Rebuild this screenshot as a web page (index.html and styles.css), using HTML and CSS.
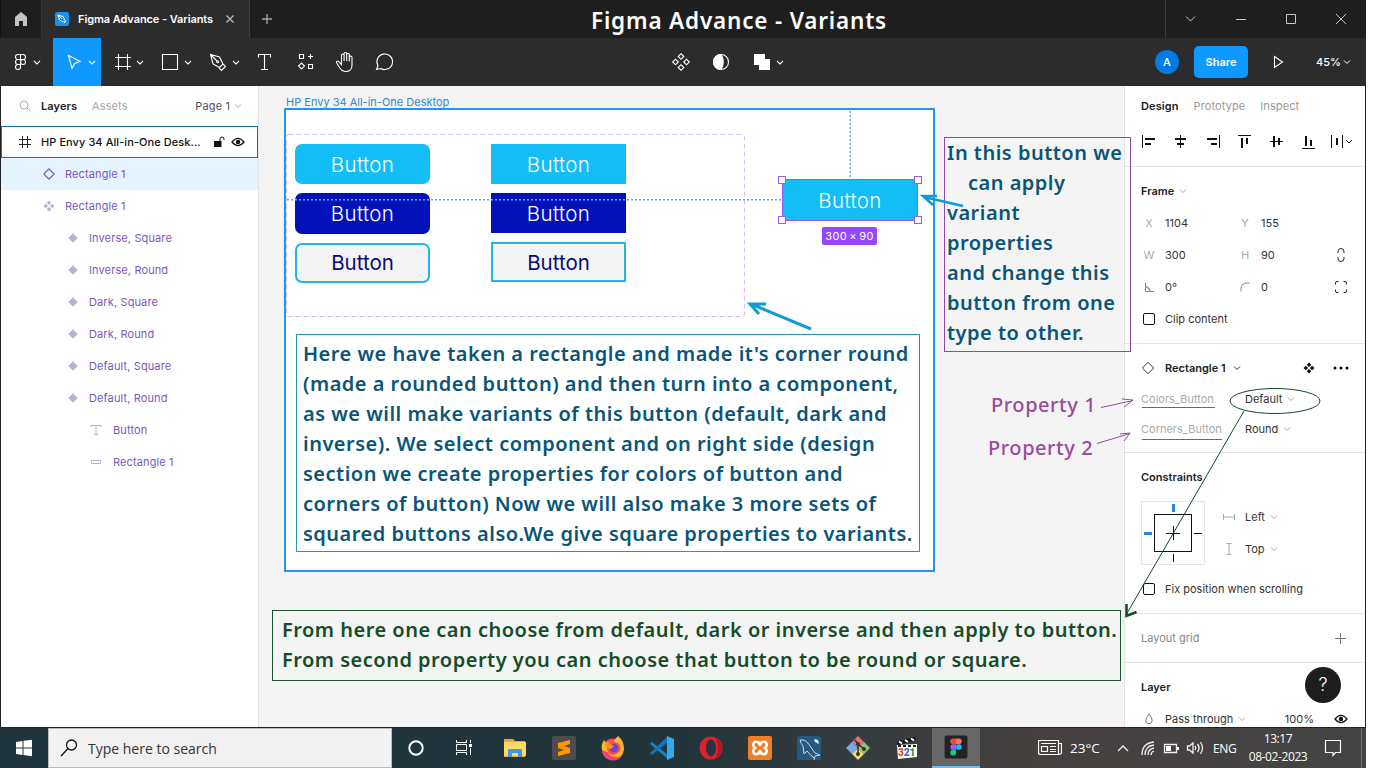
FILE: index.html
```html
<!DOCTYPE html>
<html lang="en">
<head>
<meta charset="utf-8">
<title>Figma Advance - Variants</title>
<link rel="stylesheet" href="styles.css">
</head>
<body>
<svg width="0" height="0" class="defs">
  <symbol id="chev" viewBox="0 0 8 8"><path d="M1 2.5 4 5.5 7 2.5" fill="none" stroke="currentColor"/></symbol>
  <symbol id="dia" viewBox="0 0 12 12"><path d="M6 .3 11.7 6 6 11.7.3 6z" fill="currentColor"/></symbol>
  <symbol id="four" viewBox="0 0 12 12"><path d="M6 .5 8.3 2.8 6 5.1 3.7 2.8zM6 6.9 8.3 9.2 6 11.5 3.7 9.2zM2.8 3.7 5.1 6 2.8 8.3.5 6zM9.2 3.7 11.5 6 9.2 8.3 6.9 6z" fill="currentColor"/></symbol>
  <symbol id="eye" viewBox="0 0 14 10"><path d="M1 5Q7-2.2 13 5 7 12.200 1 5z" fill="none" stroke="currentColor" stroke-width="1.200"/><circle cx="7" cy="5" r="2.200" fill="currentColor"/></symbol>
</svg>
<div class="app">
  <header class="titlebar">
    <div class="home"><svg width="40" height="38" viewBox="1 0 40 38"><path d="M15 26V17l6-5 6 5v9h-4v-5h-4v5z" fill="#c4c4c4"/></svg></div>
    <div class="tab">
      <svg width="14" height="14" viewBox="0 0 14 14"><rect width="14" height="14" rx="2" fill="#1592f5"/><path d="M3 3l5 1.500 2 4L8.500 10l-4-2zM3 3l4 4M9 11l2-2" fill="none" stroke="#fff"/></svg>
      <span class="tabname">Figma Advance - Variants</span>
      <svg class="close" width="10" height="10" viewBox="0 0 10 10"><path d="M1.500 1.500l7 7m0-7l-7 7" stroke="#b3b3b3" stroke-width="1.500"/></svg>
    </div>
    <svg class="plus" width="34" height="38" viewBox="250 0 34 38"><path d="M267 14v10M262 19h10" stroke="#a8a8a8" stroke-width="1.300"/></svg>
    <h1 class="caption">Figma Advance - Variants</h1>
    <svg class="winctl" width="201" height="38" viewBox="1165 0 201 38" fill="none" stroke="#c8c8c8"><path d="M1165.500 0v38" stroke="#3a3a3a"/><path d="M1186 16.500l4.500 4.500 4.500-4.500M1236 19.500h10M1286.500 14.500h9v9h-9zM1336 14l10 10m0-10l-10 10"/></svg>
  </header>

  <nav class="toolbar">
    <svg class="tool first" width="48" height="48" viewBox="5 38 48 48"><path d="M20.500 54.500H18a2.500 2.500 0 000 5h2.500zM20.500 54.500H23a2.500 2.500 0 010 5h-2.500M20.500 59.500H18a2.500 2.500 0 000 5h2.500zM20.500 64.500H18a2.500 2.500 0 102.500 2.500zM23 59.500a2.500 2.500 0 110 5 2.500 2.500 0 010-5z"/><path d="M34 61l3 3 3-3"/></svg>
    <svg class="tool on" width="48" height="48" viewBox="53 38 48 48"><path d="M68.500 55.500l11.500 6-5.300 1.900-2.700 5.100z"/><path d="M89 61l3 3 3-3"/></svg>
    <svg class="tool" width="48" height="48" viewBox="101 38 48 48"><path d="M118.500 54v16M127.500 54v16M115 57.500h16M115 66.500h16"/><path d="M137 61l3 3 3-3"/></svg>
    <svg class="tool" width="48" height="48" viewBox="149 38 48 48"><path d="M162.500 54.500h15v15h-15z"/><path d="M185 61l3 3 3-3"/></svg>
    <svg class="tool" width="48" height="48" viewBox="197 38 48 48"><path d="M210.500 54.500l9 2.500 3.500 7-3.500 3.500-6.500-3.500zM210.500 54.500l6.500 6.500M223 64l2.500 2.500-4 4-2.500-2.500"/><circle cx="217.700" cy="61.700" r="1"/><path d="M233 61l3 3 3-3"/></svg>
    <svg class="tool" width="40" height="48" viewBox="245 38 40 48"><path d="M258.500 57.500v-3h12v3M264.500 54.500v15M261 69.500h7"/></svg>
    <svg class="tool" width="40" height="48" viewBox="285 38 40 48"><path d="M299.500 54.500h4v4h-4zM308.500 64.500h4v4h-4zM310.500 54v5M308 56.500h5M301.500 63l3 3-3 3-3-3z"/></svg>
    <svg class="tool" width="40" height="48" viewBox="325 38 40 48"><path d="M341.500 65.500V55.300a1.300 1.300 0 012.600 0V61M344.100 61v-7.200a1.300 1.300 0 012.600 0V61M346.700 61v-6.500a1.300 1.300 0 012.600 0V61M349.300 61.500v-4a1.300 1.300 0 012.700 0V65c0 4-2.500 6.500-6 6.500-3.200 0-5-1.500-6.500-4l-3-4.700c-.6-1 .9-2.300 2-1.400l3 3.200"/></svg>
    <svg class="tool" width="40" height="48" viewBox="365 38 40 48"><path d="M376.500 69.500l1.500-3.800a7.800 7.800 0 112.800 2.800z"/></svg>
    <svg class="tool mid" width="126" height="48" viewBox="661 38 126 48"><path d="M681 53.700l2.800 2.800-2.800 2.800-2.800-2.800zM681 64.700l2.800 2.800-2.800 2.800-2.800-2.800zM675.500 59.200l2.800 2.800-2.800 2.800-2.800-2.800zM686.500 59.200l2.800 2.800-2.800 2.800-2.800-2.800z"/><circle cx="721" cy="62" r="7.500"/><path d="M721 54.500a7.500 7.500 0 000 15c3-4 3-11 0-15z" fill="#fff"/><path d="M754 54h11v5h5v11h-11v-5h-5z" fill="#fff" stroke="none"/><path d="M777 61l3 3 3-3"/></svg>
    <span class="avatar">A</span>
    <button class="share">Share</button>
    <svg class="tool play" width="24" height="48" viewBox="1266 38 24 48"><path d="M1274.500 56.500l8 5.500-8 5.500z"/></svg>
    <span class="zoomlevel">45%</span>
    <svg class="zchev" width="8" height="8"><use href="#chev"/></svg>
  </nav>

  <main class="work">
    <aside class="layers">
      <div class="lhead">
        <svg width="12" height="12" viewBox="0 0 12 12" fill="none" stroke="#aaa"><circle cx="5" cy="5" r="4"/><path d="M8 8l3.500 3.500"/></svg>
        <b>Layers</b><span class="mute">Assets</span><span class="page">Page 1</span><svg class="mute" width="8" height="8"><use href="#chev"/></svg>
      </div>
      <div class="row root">
        <svg width="12" height="12" viewBox="0 0 12 12"><path d="M3.500 0v12M8.500 0v12M0 3.500h12M0 8.500h12" stroke="#222"/></svg>
        <b>HP Envy 34 All-in-One Desk...</b>
        <svg class="lock" width="11" height="12" viewBox="0 0 11 12"><path d="M0 5h7.500v6H0z" fill="#111"/><path d="M6 5V3a2 2 0 014 0v1" fill="none" stroke="#111"/></svg>
        <svg width="14" height="10"><use href="#eye"/></svg>
      </div>
      <div class="row sel l1"><svg width="12" height="12" viewBox="0 0 12 12"><path d="M6 .8 11.200 6 6 11.200.8 6z" fill="none" stroke="#7d55c7" stroke-width="1.200"/></svg><span>Rectangle 1</span></div>
      <div class="row l1"><svg width="12" height="12"><use href="#four"/></svg><span>Rectangle 1</span></div>
      <div class="row l2"><svg width="10" height="10"><use href="#dia"/></svg><span>Inverse, Square</span></div>
      <div class="row l2"><svg width="10" height="10"><use href="#dia"/></svg><span>Inverse, Round</span></div>
      <div class="row l2"><svg width="10" height="10"><use href="#dia"/></svg><span>Dark, Square</span></div>
      <div class="row l2"><svg width="10" height="10"><use href="#dia"/></svg><span>Dark, Round</span></div>
      <div class="row l2"><svg width="10" height="10"><use href="#dia"/></svg><span>Default, Square</span></div>
      <div class="row l2"><svg width="10" height="10"><use href="#dia"/></svg><span>Default, Round</span></div>
      <div class="row l3"><svg width="12" height="12" viewBox="0 0 12 12"><path d="M1 3V1.500h10V3M6 1.500v9M4 10.500h4" fill="none" stroke="currentColor"/></svg><span>Button</span></div>
      <div class="row l3"><svg width="12" height="12" viewBox="0 0 12 12"><path d="M1.500 4.500h9v3h-9z" fill="none" stroke="currentColor"/></svg><span>Rectangle 1</span></div>
    </aside>

    <section class="canvas">
      <span class="framelabel">HP Envy 34 All-in-One Desktop</span>
      <div class="frame"></div>
      <svg class="guides" width="865" height="500" viewBox="259 86 865 500" fill="none"><rect x="286.500" y="134.500" width="458" height="182" rx="2" stroke="#d3bff0" stroke-dasharray="5 3"/></svg>
      <div class="btn b1">Button</div><div class="btn b2">Button</div>
      <div class="btn b3 dark">Button</div><div class="btn b4 dark">Button</div>
      <div class="btn b5 inv">Button</div><div class="btn b6 inv">Button</div>
      <svg class="guides" width="865" height="500" viewBox="259 86 865 500" fill="none" stroke="#5aade6" stroke-width="1.400" stroke-dasharray="2 2"><path d="M287 199.700h495M850.200 111v68"/></svg>
      <div class="btn b7">Button</div>
      <i class="h h1"></i><i class="h h2"></i><i class="h h3"></i><i class="h h4"></i>
      <span class="size">300 × 90</span>
      <div class="note explain">Here we have taken a rectangle and made it's corner round<br>(made a rounded button) and then turn into a component,<br>as we will make variants of this button (default, dark and<br>inverse). We select component and on right side (design<br>section we create properties for colors of button and<br>corners of button) Now we will also make 3 more sets of<br>squared buttons also.We give square properties to variants.</div>
      <div class="note choose">From here one can choose from default, dark or inverse and then apply to button.<br>From second property you can choose that button to be round or square.</div>
      <span class="prop p1">Property 1</span>
      <span class="prop p2">Property 2</span>
    </section>

    <aside class="design">
      <div class="dhead"><b>Design</b><span>Prototype</span><span>Inspect</span></div>
      <svg class="align" width="240" height="41" viewBox="1125 126 240 41" fill="none" stroke="#111"><path d="M1142.500 135v13"/><path d="M1145 139h10M1145 144h6M1175 139h11M1177 144h7M1207 139h10M1211 144h6" stroke-width="2"/><path d="M1180.500 135v13M1219.500 135v13M1238 135.500h13M1270 141.500h13M1302 148.500h13M1331.500 135v13M1342.500 135v13"/><path d="M1242 138v10M1247 138v6M1274 136v11M1279 138v7M1306 136v10M1311 140v6M1337 138v7" stroke-width="2"/><path d="M1346 140l3 3 3-3"/></svg>
      <div class="sec">
        <div class="drow"><b>Frame</b><svg class="c mute" width="8" height="8"><use href="#chev"/></svg></div>
        <div class="drow grid"><i>X</i><span>1104</span><i>Y</i><span>155</span></div>
        <div class="drow grid"><i>W</i><span>300</span><i>H</i><span>90</span><svg width="14" height="16" viewBox="0 0 14 16"><path d="M4 6V4.500a3 3 0 016 0V6M4 10v1.500a3 3 0 006 0V10" fill="none" stroke="#222"/></svg></div>
        <div class="drow grid"><i><svg width="9" height="9" viewBox="0 0 9 9"><path d="M.5 0v8.500H9M.5 3.500q4 0 4.500 5M.5 3l5 5" fill="none" stroke="#888"/></svg></i><span>0°</span><i><svg width="10" height="10" viewBox="0 0 10 10"><path d="M1 9.500V7q0-6 6-6h2.500" fill="none" stroke="#888"/></svg></i><span>0</span><svg width="14" height="14" viewBox="0 0 14 14"><path d="M1.500 4.500V3q0-1.500 1.500-1.500h1.500M9.500 1.500H11q1.500 0 1.500 1.500v1.500M12.500 9.500V11q0 1.500-1.500 1.500H9.500M4.500 12.500H3q-1.500 0-1.500-1.500V9.500" fill="none" stroke="#222"/></svg></div>
        <div class="drow"><i class="cb"></i><span>Clip content</span></div>
      </div>
      <div class="sec">
        <div class="drow inst"><svg width="14" height="14" viewBox="0 0 14 14"><path d="M7 1.300 12.700 7 7 12.700 1.300 7z" fill="none" stroke="#333"/></svg><b>Rectangle 1</b><svg class="c" width="8" height="8"><use href="#chev"/></svg><svg class="push" width="12" height="12"><use href="#four"/></svg><svg width="16" height="4" viewBox="0 0 16 4"><circle cx="2" cy="2" r="1.500"/><circle cx="8" cy="2" r="1.500"/><circle cx="14" cy="2" r="1.500"/></svg></div>
        <div class="drow prow"><span class="mute u">Colors_Button</span><span>Default</span><svg class="c mute" width="8" height="8"><use href="#chev"/></svg></div>
        <div class="drow prow"><span class="mute u">Corners_Button</span><span>Round</span><svg class="c mute" width="8" height="8"><use href="#chev"/></svg></div>
      </div>
      <div class="sec">
        <div class="drow"><b>Constraints</b></div>
        <div class="cons">
          <svg width="64" height="64" viewBox="0 0 64 64" fill="none" stroke="#111"><rect x=".5" y=".5" width="63" height="63" stroke="#e5e5e5"/><rect x="13.500" y="13.500" width="37" height="37"/><path d="M32.500 25v14M25 32.500h14M53 32.500h8M32.500 53v8"/><path d="M32.500 3v8M3 32.500h8" stroke="#1f87dd" stroke-width="3"/></svg>
          <div class="cc">
            <div class="crow"><svg width="12" height="8" viewBox="0 0 12 8"><path d="M.5 1v6M11.500 1v6M.5 4h11" stroke="#aaa" fill="none"/></svg><span>Left</span><svg class="c mute" width="8" height="8"><use href="#chev"/></svg></div>
            <div class="crow"><svg width="12" height="12" viewBox="0 0 12 12"><path d="M3.500.5h5M3.500 11.500h5M6 .5v11" stroke="#aaa" fill="none"/></svg><span>Top</span><svg class="c mute" width="8" height="8"><use href="#chev"/></svg></div>
          </div>
        </div>
        <div class="drow fix"><i class="cb"></i><span>Fix position when scrolling</span></div>
      </div>
      <div class="sec"><div class="drow"><span class="grey">Layout grid</span><svg class="push plusgrid" width="12" height="12" viewBox="0 0 12 12"><path d="M6.500 1v11M1 6.500h11" stroke="#777"/></svg></div></div>
      <div class="sec last">
        <div class="drow"><b>Layer</b></div>
        <div class="drow"><svg class="drop" width="8" height="12" viewBox="0 0 8 12"><path d="M4 1Q.8 5 .8 7.500a3.200 3.200 0 006.400 0Q7.200 5 4 1z" fill="none" stroke="#777"/></svg><span>Pass through</span><svg class="c mute" width="8" height="8"><use href="#chev"/></svg><span class="pct">100%</span><svg class="deye" width="14" height="10"><use href="#eye"/></svg></div>
      </div>
    </aside>
  </main>

  <footer class="taskbar">
    <svg class="ti" width="48" height="40" viewBox="0 728 48 40" fill="#fff"><path d="M16 742l6.500-1v6.500H16zM23.500 740.800L32 739.700v7.800h-8.500zM16 748.500h6.500v6.500l-6.500-1zM23.500 748.500H32v7.700l-8.500-1.100z"/></svg>
    <div class="search"><svg width="18" height="18" viewBox="0 0 18 18" fill="none" stroke="#111" stroke-width="1.300"><circle cx="11.500" cy="6" r="5"/><path d="M8 9.500L1 17"/></svg><span>Type here to search</span></div>
    <svg class="ti" width="48" height="40" viewBox="392 728 48 40"><circle cx="416" cy="748" r="6.700" fill="none" stroke="#fff" stroke-width="2"/></svg>
    <svg class="ti" width="48" height="40" viewBox="440 728 48 40" fill="none" stroke="#fff"><path d="M456.500 740v2.500h10V740M456.500 755v-2.500h10v2.500M456.500 744.500h10v6h-10zM470.500 740v3M470.500 748v7"/><path d="M469 744h3v3h-3z" fill="#fff" stroke="none"/></svg>
    <svg class="ti app1" width="48" height="40" viewBox="491 728 48 40"><path d="M504 739h9l2 2h10v16h-21z" fill="#e5ad2f"/><path d="M504 742h22v14h-22z" fill="#ffd868"/><path d="M508 757v-7q0-1 1-1h12q1 0 1 1v7h-4v-4h-6v4z" fill="#3f9be0"/></svg>
    <svg class="ti" width="48" height="40" viewBox="540 728 48 40"><rect x="552" y="736" width="24" height="24" rx="2" fill="#4d4d4d"/><path d="M558 743l12-3v4l-6 2 6 2v5l-12 3v-4l6-2-6-2z" fill="#ff9800"/></svg>
    <svg class="ti" width="48" height="40" viewBox="589 728 48 40"><circle cx="613" cy="749" r="10.500" fill="#ff4f45"/><path d="M602 750q-1-6 2-10l2 3 3-1-2 7q2 8 9 5 8-4 2-11l-4-1q1-4 4-6 6 5 6 13-1 10-11 11-10-1-11-10z" fill="#ffb52e"/><path d="M602 750q1 10 11 10.500 6 0 9-5-9 5-14-3z" fill="#f93f78"/><circle cx="614" cy="748" r="4.500" fill="#7046d0"/><path d="M605 744q4-2 7 1l2 1-3 3q-4 0-6-5z" fill="#ff8b20"/></svg>
    <svg class="ti" width="48" height="40" viewBox="638 728 48 40"><path d="M650 744l2-2 16 13v4z" fill="#1583d0"/><path d="M650 753l18-17v6l-16 13z" fill="#0f75bd"/><path d="M667 736l7 3v18l-7 3z" fill="#31a8f1"/></svg>
    <svg class="ti" width="48" height="40" viewBox="687 728 48 40"><circle cx="711" cy="748" r="11.500" fill="#e01f2c"/><path d="M714 737q8 3 8 11t-8 11q4-4 4-11t-4-11z" fill="#b81423"/><ellipse cx="711" cy="748" rx="5" ry="8.500" fill="#26363c"/></svg>
    <svg class="ti" width="48" height="40" viewBox="736 728 48 40"><rect x="748" y="736" width="24" height="24" rx="2" fill="#f07e26"/><path d="M757 742c-4-1-5 4-2 6-3 2-2 7 2 6 3 0 2-3 3-3s0 3 3 3c4 1 5-4 2-6 3-2 2-7-2-6-3 0-2 3-3 3s0-3-3-3z" fill="none" stroke="#fff" stroke-width="2.500"/></svg>
    <svg class="ti" width="48" height="40" viewBox="785 728 48 40"><rect x="797" y="736" width="24" height="24" rx="2" fill="#28587d"/><path d="M800 740q6-1 10 6l5 7 5 2-5 1-1 4M800 740q1 4 3 6l1 8 3-3q3 4 7 7" fill="none" stroke="#c5dce8"/><path d="M814 739l4 1 1 4-4-2z" fill="#eee"/></svg>
    <svg class="ti" width="48" height="40" viewBox="834 728 48 40"><path d="M858 736l6 6-6 6-6-6z" fill="#e77070"/><path d="M852 742l6 6-6 6-6-6z" fill="#79a9e8"/><path d="M864 742l6 6-6 6-6-6z" fill="#8bc66a"/><path d="M858 748l6 6-6 6-6-6z" fill="#f4dc6a"/><path d="M855 740l3 4v10M858 744l6 5" stroke="#333" stroke-width="1.500" fill="none"/><circle cx="858" cy="744" r="2" fill="#333"/><circle cx="858" cy="754" r="2" fill="#333"/><circle cx="864" cy="749" r="2" fill="#333"/></svg>
    <svg class="ti" width="48" height="40" viewBox="883 728 48 40"><path d="M897 745l20-1v13l-19 2z" fill="#fff"/><path d="M897 742l18-5 1 3-18 5z" fill="#111"/><path d="M899 741.500l3 2M905 740l3 2M911 738.500l3 2" stroke="#fff" stroke-width="2"/><path d="M898 746h18" stroke="#222" stroke-width="2" stroke-dasharray="3 2"/><text x="898" y="756" font-family="Roboto" font-size="10" font-weight="900"><tspan fill="#e0501c">3</tspan><tspan fill="#2f76cc">2</tspan><tspan fill="#259b42">1</tspan></text></svg>
    <svg class="ti cur" width="48" height="40" viewBox="932 728 48 40"><rect x="944" y="736" width="24" height="24" rx="2" fill="#222"/><path d="M956 739h-3a3 3 0 000 6h3z" fill="#f24e1e"/><path d="M956 739h3a3 3 0 010 6h-3z" fill="#ff7262"/><path d="M956 745h-3a3 3 0 000 6h3z" fill="#a259ff"/><circle cx="959" cy="748" r="3" fill="#1abcfe"/><path d="M956 751h-3a3 3 0 103 3z" fill="#0acf83"/></svg>
    <div class="tray">
      <svg width="24" height="18" viewBox="1038 739 24 18" fill="none" stroke="#fff"><path d="M1038.500 740.500h20v14h-18q-2 0-2-2zM1058.500 743.500h3v9q0 2-3 2M1041 743.500h15M1041.500 746.500h6v5h-6zM1050 746.500h6M1050 749.500h6M1050 751.500h6" stroke-width="1.200"/></svg>
      <span class="temp">23°C</span>
      <svg class="sys" width="90" height="24" viewBox="1116 736 90 24" fill="none" stroke="#eee" stroke-width="1.300"><path d="M1118 751l5-5 5 5"/><path d="M1142 755q0-12 12-13M1145 755q0-9 9-10M1148 755q0-6 6-7M1151 755q0-3 3-4"/><path d="M1164.500 744.500h12v8h-12z"/><path d="M1166 746h5v5h-5zM1177 747h2v3h-2z" fill="#fff" stroke="none"/><path d="M1187.500 746v4h2l3.500 3v-10l-3.500 3zM1195 746q1.500 2 0 4M1197.500 744q3 4 0 8M1200.500 742q4 6 0 12"/></svg>
      <span class="eng">ENG</span>
      <div class="clock"><span>13:17</span><span>08-02-2023</span></div>
      <svg class="notif" width="18" height="18" viewBox="0 0 18 18"><path d="M1.500 1.500h15v12h-5l-2.500 3v-3H1.500z" fill="none" stroke="#fff" stroke-width="1.200"/></svg>
    </div>
  </footer>

  <div class="help">?</div>
  <div class="note variant">In this button we<br><span class="ind">can apply</span><br>variant<br>properties<br>and change this<br>button from one<br>type to other.</div>
  <svg class="arrows" width="1388" height="728" viewBox="0 0 1388 728" fill="none">
    <g stroke="#109bd7" stroke-width="3"><path d="M811 329l-60-25M766 304h-16l9 10"/><path d="M963 206l-39-9M937 196l-14 0 10 9" stroke-width="2.600"/></g>
    <g stroke="#944a9a"><path d="M1101 407.500l32-7M1122 399l11 1-9 7M1097 443.500l33-10M1120 434l10-1-6 8"/><path d="M1142 407.500h73M1142 439.500h80"/></g>
    <g stroke="#17492b"><ellipse cx="1275" cy="401" rx="45" ry="12.500"/><path d="M1244 411L1126 615"/><path d="M1126.500 604v12l10-4" stroke-width="2.500"/></g>
  </svg>
</div>
</body>
</html>
```
FILE: styles.css
```css
* { box-sizing: border-box; }
body { margin: 0; background: #fff; font-family: Inter, "Liberation Sans", sans-serif; font-size: 11px; letter-spacing: 0; color: #333; overflow: hidden; }
svg { display: block; flex: none; }
b { font-weight: 600; color: #222; }
i { font-style: normal; }
.defs { position: absolute; }
.app { position: relative; width: 1366px; height: 768px; display: flex; flex-direction: column; }
.mute { color: #aaa; }
.grey { color: #888; }

.titlebar { height: 38px; background: #1e1e1e; display: flex; border-left: 1px solid #111; }
.home { width: 41px; border-right: 1px solid #363636; }
.tab { width: 208px; background: #2c2c2c; display: flex; align-items: center; padding-left: 13px; border-right: 1px solid #3c3c3c; }
.tabname { margin-left: 9px; color: #fff; font-weight: 600; letter-spacing: -.08px; width: 136px; white-space: nowrap; }
.close { margin-left: 11px; }
.caption { margin: 0 0 0 307px; flex: 1; color: #fff; font: 600 22.5px/41px "Noto Sans", sans-serif; letter-spacing: .82px; white-space: nowrap; }

.toolbar { height: 48px; background: #2c2c2c; display: flex; align-items: center; }
.tool { fill: none; stroke: #fff; stroke-width: 1.1; }
.first { margin-left: 5px; }
.on { background: #0d99ff; }
.mid { margin-left: 256px; }
.avatar { margin-left: 368px; width: 24px; height: 24px; border-radius: 50%; background: #007be5; color: #fff; font-weight: 500; line-height: 24px; text-align: center; }
.share { margin-left: 15px; width: 54px; height: 32px; border: 0; border-radius: 5px; background: #0d99ff; color: #fff; font: 600 11px Inter, sans-serif; padding: 0; }
.play { margin-left: 18px; }
.zoomlevel { margin-left: 26px; width: 23px; color: #fff; font-weight: 500; }
.zchev { margin-left: 4px; color: #fff; }

.work { height: 642px; display: flex; border-left: 1px solid #222; border-right: 1px solid #222; border-bottom: 1px solid #222; overflow: hidden; }
.layers { width: 258px; flex: none; border-right: 1px solid #e3e3e3; background: #fff; letter-spacing: .12px; }
.lhead { height: 40px; display: flex; align-items: center; padding-left: 18px; }
.lhead b { margin-left: 10px; width: 51px; }
.lhead .page { margin-left: auto; color: #555; }
.lhead .page + svg { margin: 0 16px 0 4px; }
.row { height: 32px; display: flex; align-items: center; color: #bfaed8; }
.row span { color: #7b57c2; }
.root { border: 1px solid #1373b5; padding-left: 17px; }
.root b { margin-left: 10px; color: #111; font-weight: 500; width: 160px; white-space: nowrap; letter-spacing: .07px; }
.root svg { color: #111; }
.root .lock { margin: 0 6px 0 13px; }
.sel { background: #e5f4ff; }
.l1 { padding-left: 42px; }
.l1 span { margin-left: 10px; }
.l2 { padding-left: 67px; }
.l2 span { margin-left: 11px; }
.l3 { padding-left: 89px; }
.l3 span { margin-left: 11px; }

.canvas { position: relative; width: 865px; flex: none; background: #f4f4f4; overflow: hidden; }
.canvas > * { position: absolute; }
.guides { left: 0; top: 0; }
.framelabel { left: 27px; top: 9px; color: #3289d4; white-space: nowrap; }
.frame { left: 25px; top: 22px; width: 651px; height: 464px; background: #fff; border: 2px solid #2794ef; }
.btn { width: 135px; height: 41px; background: #13bdf5; color: #fff; font-size: 20.5px; font-weight: 300; letter-spacing: .4px; display: flex; align-items: center; justify-content: center; }
.b1, .b3, .b5 { left: 36px; border-radius: 7px; }
.b2, .b4, .b6 { left: 232px; }
.b1, .b2 { top: 58px; height: 40px; }
.b3, .b4 { top: 107px; }
.b4, .b5, .b6 { height: 40px; }
.b5 { top: 157px; padding-bottom: 1px; }
.b6 { top: 156px; }
.b7 { left: 523px; top: 93px; width: 136px; height: 42px; border: 1px solid #9b59e6; }
.dark { background: #0212b8; }
.inv { background: #f4f4f4; border: 2px solid #23b5e4; color: #0b0b77; font-weight: 400; letter-spacing: 0; }
.h { width: 8px; height: 8px; background: #fff; border: 1px solid #9b5ce6; }
.h1, .h3 { left: 519px; }
.h2, .h4 { left: 655px; }
.h1, .h2 { top: 90px; }
.h3, .h4 { top: 130px; }
.size { left: 563px; top: 141px; width: 55px; height: 18px; border-radius: 2px; background: #9747ff; color: #fff; line-height: 18px; text-align: center; letter-spacing: .3px; word-spacing: -1px; white-space: nowrap; }
.note { font: 600 20px/30px "Noto Sans", sans-serif; letter-spacing: .49px; color: #0a5577; white-space: nowrap; }
.explain { left: 37px; top: 248px; width: 624px; height: 218px; border: 1px solid #2496b8; padding: 4px 6px; }
.choose { left: 13px; top: 524px; width: 849px; height: 71px; border: 1px solid #1b5532; padding: 4px 9px; color: #154d28; }
.prop { font: 500 20px/30px "Noto Sans", sans-serif; letter-spacing: .55px; color: #9b4a9e; }
.p1 { left: 732px; top: 304px; }
.p2 { left: 729px; top: 347px; }

.design { width: 241px; flex: none; background: #fff; border-left: 1px solid #e3e3e3; }
.dhead { height: 40px; display: flex; align-items: center; gap: 15px; padding-left: 16px; color: #999; letter-spacing: .1px; }
.sec { border-top: 1px solid #e5e5e5; padding: 8px 16px; margin-top: -1px; }
.sec + .sec { margin-top: 0; }
.drow { height: 32px; display: flex; align-items: center; white-space: nowrap; }
.c { margin-left: 5px; }
.grid { display: grid; grid-template-columns: 24px 72px 24px 73px 16px; }
.grid i { width: 16px; display: grid; place-items: center; color: #aaa; }
.cb { width: 12px; height: 12px; margin: 0 10px 0 2px; border: 1px solid #111; border-radius: 2px; }
.inst b { margin-left: 10px; }
.inst .c { margin-left: 7px; }
.push { margin-left: auto; }
.inst svg:last-child { margin-left: 18px; }
.sec .push { color: #111; }
.plusgrid { margin-right: 3px; }
.prow { height: 30px; }
.u { width: 104px; }
.cons { display: flex; padding-top: 8px; }
.cc { margin-left: 18px; }
.crow { height: 32px; display: flex; align-items: center; }
.crow span { margin-left: 10px; }
.fix { margin-top: 8px; }
.drop { margin: 0 12px 0 4px; }
.pct { margin-left: auto; }
.deye { margin: 0 1px 0 20px; color: #111; }

.taskbar { height: 40px; display: flex; background: linear-gradient(90deg, #1f343b 0, #22353b 50%, #343b3e 62%, #46403f 76%, #444 100%); }
.search { width: 344px; background: #f1f1f1; border: 1px solid #bbb; display: flex; align-items: center; padding-left: 11px; color: #333; font: 14px "Open Sans", sans-serif; }
.search span { margin-left: 10px; }
.app1 { margin-left: 3px; }
.app1 ~ .ti { margin-left: 1px; }
.cur { background: #686767; border-bottom: 2px solid #76b9ed; }
.tray { flex: 1; display: flex; align-items: center; padding-left: 58px; color: #fff; font-family: "Open Sans", sans-serif; font-size: 12px; margin-right: 4px; border-right: 1px solid #777; }
.temp { margin-left: 8px; width: 46px; font-size: 13.5px; }
.eng { margin-left: 7px; width: 33px; letter-spacing: -.3px; }
.clock { width: 64px; display: flex; flex-direction: column; align-items: center; line-height: 18px; white-space: nowrap; letter-spacing: -.4px; }
.notif { margin-left: 14px; }

.help { position: absolute; left: 1305px; top: 667px; width: 36px; height: 36px; border-radius: 50%; background: #1e1e1e; color: #fff; font-size: 18px; font-weight: 300; line-height: 36px; text-align: center; }
.variant { position: absolute; left: 944px; top: 137px; width: 187px; height: 215px; border: 1px solid #944a9a; padding-left: 2px; }
.ind { margin-left: 21px; }
.arrows { position: absolute; left: 0; top: 0; }
```
